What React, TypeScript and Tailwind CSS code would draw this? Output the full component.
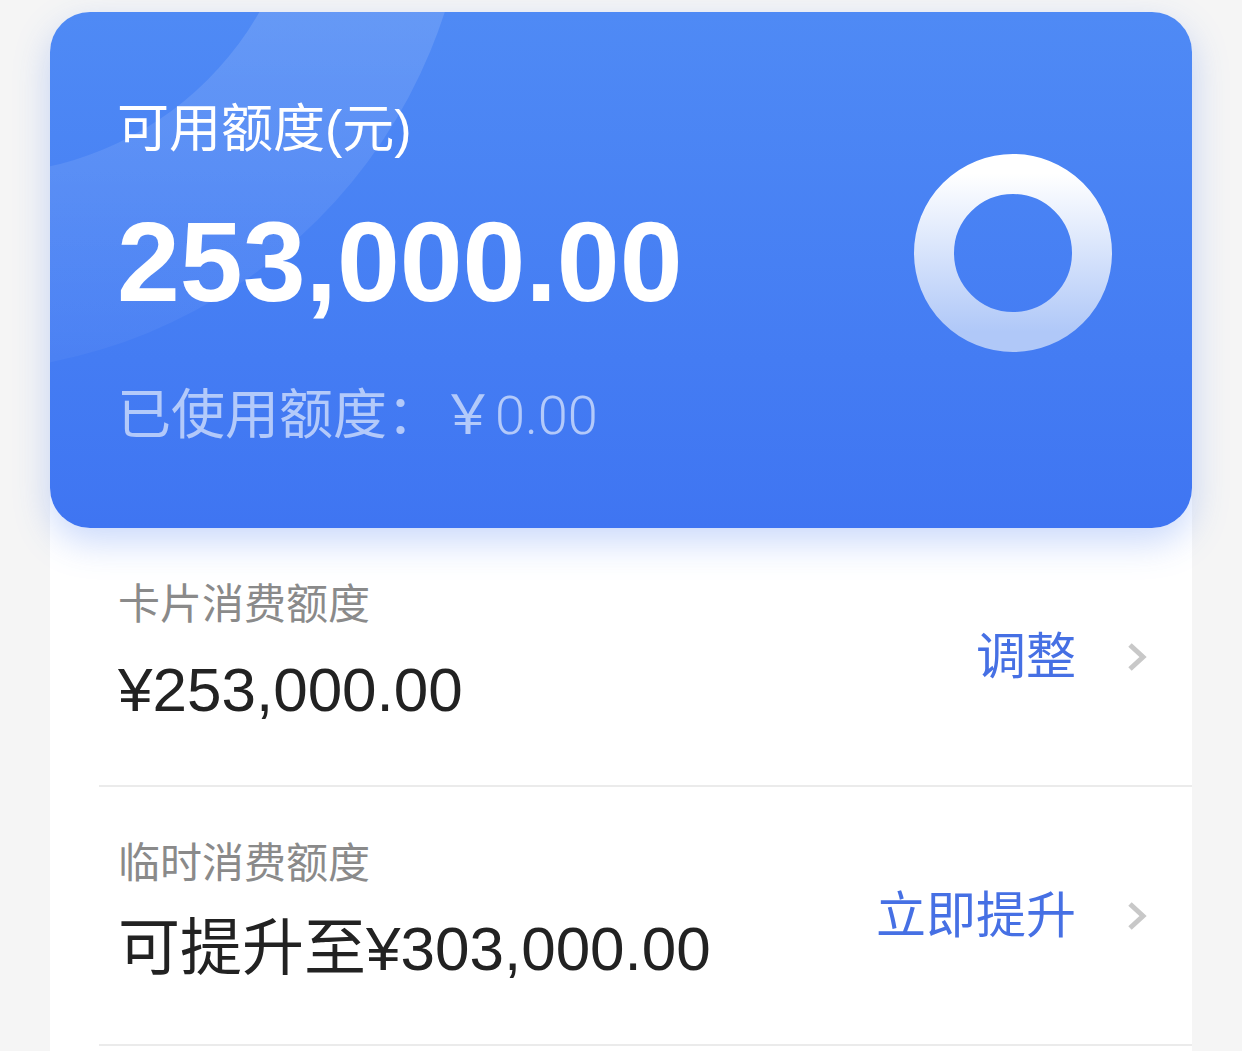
import React from "react";

const Chevron = () => (
  <svg width="22" height="32" viewBox="0 0 22 32" fill="none">
    <path d="M4 4 L17 16 L4 28" stroke="#c8c8c8" strokeWidth="5" strokeLinecap="butt" strokeLinejoin="miter" />
  </svg>
);

const Ring = () => (
  <svg width="198" height="198" viewBox="0 0 198 198">
    <defs>
      <linearGradient id="ringG" x1="0" y1="0" x2="0" y2="1">
        <stop offset="0" stopColor="#ffffff" />
        <stop offset="1" stopColor="#b0c8f8" />
      </linearGradient>
    </defs>
    <circle cx="99" cy="99" r="79" fill="none" stroke="url(#ringG)" strokeWidth="40" />
  </svg>
);

const Decor = () => (
  <svg className="absolute left-0 top-0" width="1142" height="516" viewBox="0 0 1142 516">
    <defs>
      <linearGradient id="decG" x1="0" y1="0" x2="0" y2="380" gradientUnits="userSpaceOnUse">
        <stop offset="0" stopColor="#ffffff" stopOpacity="0.13" />
        <stop offset="1" stopColor="#ffffff" stopOpacity="0.03" />
      </linearGradient>
    </defs>
    <path
      fillRule="evenodd"
      fill="url(#decG)"
      d="M -620 -160 A 520 520 0 1 0 420 -160 A 520 520 0 1 0 -620 -160 Z M -392 -160 A 322 322 0 1 0 252 -160 A 322 322 0 1 0 -392 -160 Z"
    />
  </svg>
);

type RowProps = { label: string; amount: React.ReactNode; action: string };

const Row = ({ label, amount, action }: RowProps) => (
  <div>
    <div className="flex items-center pl-[68px] pr-[44px]">
      <div className="flex-1 pt-[56px] pb-[64px]">
        <div className="text-[42px] leading-[42px] text-[#8a8a8a]">{label}</div>
        <div className="mt-[33px] text-[62px] leading-[62px] text-[#222222] whitespace-nowrap">{amount}</div>
      </div>
      <div className="flex items-center gap-[50px]">
        <span className="text-[50px] leading-[50px] text-[#4670e4]">{action}</span>
        <Chevron />
      </div>
    </div>
    <div className="ml-[49px] h-[2px] bg-[#ebebeb]" />
  </div>
);

export default function App() {
  return (
    <div className="min-h-[1051px] bg-[#f5f5f5] px-[50px] pt-[12px] flex flex-col font-['Liberation_Sans','Noto_Sans_CJK_SC',sans-serif]">
      <div className="relative z-10 h-[516px] rounded-[40px] overflow-hidden bg-gradient-to-b from-[#4f8af5] to-[#3f75f2] shadow-[0_14px_36px_rgba(63,117,242,0.28)]">
        <Decor />
        <div className="relative flex items-start justify-between pl-[67px] pr-[80px]">
          <div className="pt-[91px]">
            <div className="text-[52px] leading-[52px] text-white">可用额度(元)</div>
            <div className="mt-[51px] text-[113px] leading-[113px] font-bold text-white">253,000.00</div>
            <div className="mt-[69px] text-[54px] leading-[54px] text-white/60 whitespace-nowrap">
              已使用额度：￥<span className="font-['Roboto','Liberation_Sans',sans-serif] font-light">0.00</span>
            </div>
          </div>
          <div className="mt-[142px]">
            <Ring />
          </div>
        </div>
      </div>
      <div className="-mt-[40px] pt-[40px] bg-white flex-1">
        <Row label="卡片消费额度" amount="¥253,000.00" action="调整" />
        <Row label="临时消费额度" amount="可提升至¥303,000.00" action="立即提升" />
      </div>
    </div>
  );
}
